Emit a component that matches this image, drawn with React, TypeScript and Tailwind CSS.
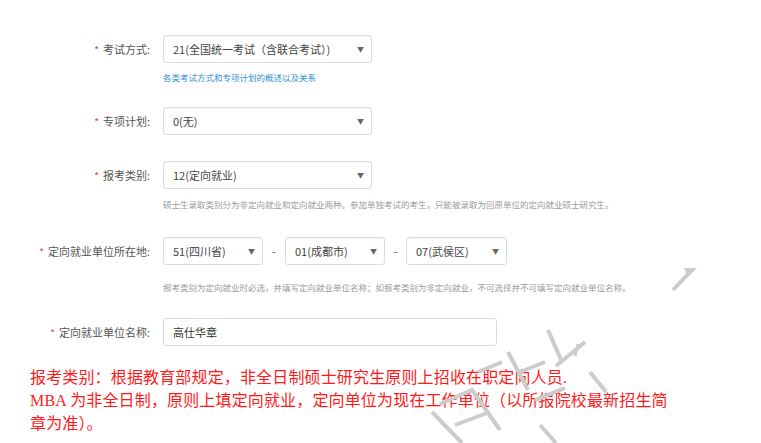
import React from 'react';

const FONT = { fontFamily: '"Microsoft YaHei", "Noto Sans CJK SC", "Noto Sans", sans-serif' };
const SERIF = { fontFamily: '"Liberation Serif", "Noto Sans CJK SC", serif' };

function Label({ text }: { text: string }) {
  return (
    <div className="w-[150px] shrink-0 flex items-center justify-end text-[11px] text-[#555]">
      <span className="text-[#e4393c] text-[10px] mr-[4px]">*</span>
      <span>{text}</span>
    </div>
  );
}

function Select({ value, width }: { value: string; width: string }) {
  return (
    <div
      className={`${width} h-[28px] flex items-center justify-between pl-[9px] pr-[7px] border border-[#dcdcdc] rounded-[3px] bg-white shadow-[inset_0_1px_1px_rgba(0,0,0,0.05)] text-[11px] text-[#444]`}
    >
      <span>{value}</span>
      <span className="text-[7px] text-[#666]">▼</span>
    </div>
  );
}

function Row({ label, children, className }: { label: string; children: React.ReactNode; className?: string }) {
  return (
    <div className={`flex items-center ${className ?? ''}`}>
      <Label text={label} />
      <div className="ml-[13px] flex items-center">{children}</div>
    </div>
  );
}

function Help({ text, blue, className }: { text: string; blue?: boolean; className?: string }) {
  return (
    <div className={`pl-[163px] h-[12px] leading-[12px] text-[8.5px] ${blue ? 'text-[#2f8ed8]' : 'text-[#9a9a9a]'} ${className ?? ''}`}>
      {text}
    </div>
  );
}

function Watermark() {
  return (
    <svg className="absolute left-0 top-0 pointer-events-none" width="761" height="443" viewBox="0 0 761 443">
      <g stroke="#cccccc" strokeWidth="4" fill="none">
        <path d="M673 290 L690 272" />
        <path d="M575 356 L578 344" strokeWidth="3" />
        <path d="M432 412 L462 443" />
        <path d="M440 404 L472 390 L500 430" />
        <path d="M455 425 L490 412" />
        <path d="M478 372 L502 362" />
        <path d="M508 352 L528 390" />
        <path d="M520 372 L545 362" />
        <path d="M535 400 L565 388" />
        <path d="M548 330 L562 362" />
        <path d="M556 366 L585 342" />
        <path d="M590 372 L606 392" />
        <path d="M540 425 L556 443" />
      </g>
      <path d="M684 268 L697 268 L688 277 Z" fill="#cccccc" />
    </svg>
  );
}

export default function App() {
  return (
    <div className="relative w-[761px] h-[443px] bg-white overflow-hidden" style={FONT}>
      <div className="pt-[35px]">
        <Row label="考试方式:">
          <Select value="21(全国统一考试（含联合考试）)" width="w-[209px]" />
        </Row>
        <Help text="各类考试方式和专项计划的概述以及关系" blue className="mt-[8px]" />

        <Row label="专项计划:" className="mt-[24px]">
          <Select value="0(无)" width="w-[209px]" />
        </Row>

        <Row label="报考类别:" className="mt-[26px]">
          <Select value="12(定向就业)" width="w-[209px]" />
        </Row>
        <Help
          text="硕士生录取类别分为非定向就业和定向就业两种。参加单独考试的考生，只能被录取为回原单位的定向就业硕士研究生。"
          className="mt-[9px]"
        />

        <Row label="定向就业单位所在地:" className="mt-[27px]">
          <Select value="51(四川省)" width="w-[100px]" />
          <span className="w-[22px] text-center text-[12px] text-[#666]">-</span>
          <Select value="01(成都市)" width="w-[100px]" />
          <span className="w-[21px] text-center text-[12px] text-[#666]">-</span>
          <Select value="07(武侯区)" width="w-[101px]" />
        </Row>
        <Help
          text="报考类别为定向就业时必选，并填写定向就业单位名称；如报考类别为非定向就业，不可选择并不可填写定向就业单位名称。"
          className="mt-[16px]"
        />

        <Row label="定向就业单位名称:" className="mt-[25px]">
          <div className="w-[334px] h-[28px] flex items-center pl-[9px] border border-[#dcdcdc] rounded-[3px] bg-white text-[11px] text-[#333]">
            高仕华章
          </div>
        </Row>

        <div className="mt-[20px] pl-[30px] w-[675px] text-[16px] leading-[23px] text-[#ff1a1a] tracking-[0.15px]" style={SERIF}>
          <p>报考类别：根据教育部规定，非全日制硕士研究生原则上招收在职定向人员.</p>
          <p>MBA 为非全日制，原则上填定向就业，定向单位为现在工作单位（以所报院校最新招生简章为准）。</p>
        </div>
      </div>
      <Watermark />
    </div>
  );
}
